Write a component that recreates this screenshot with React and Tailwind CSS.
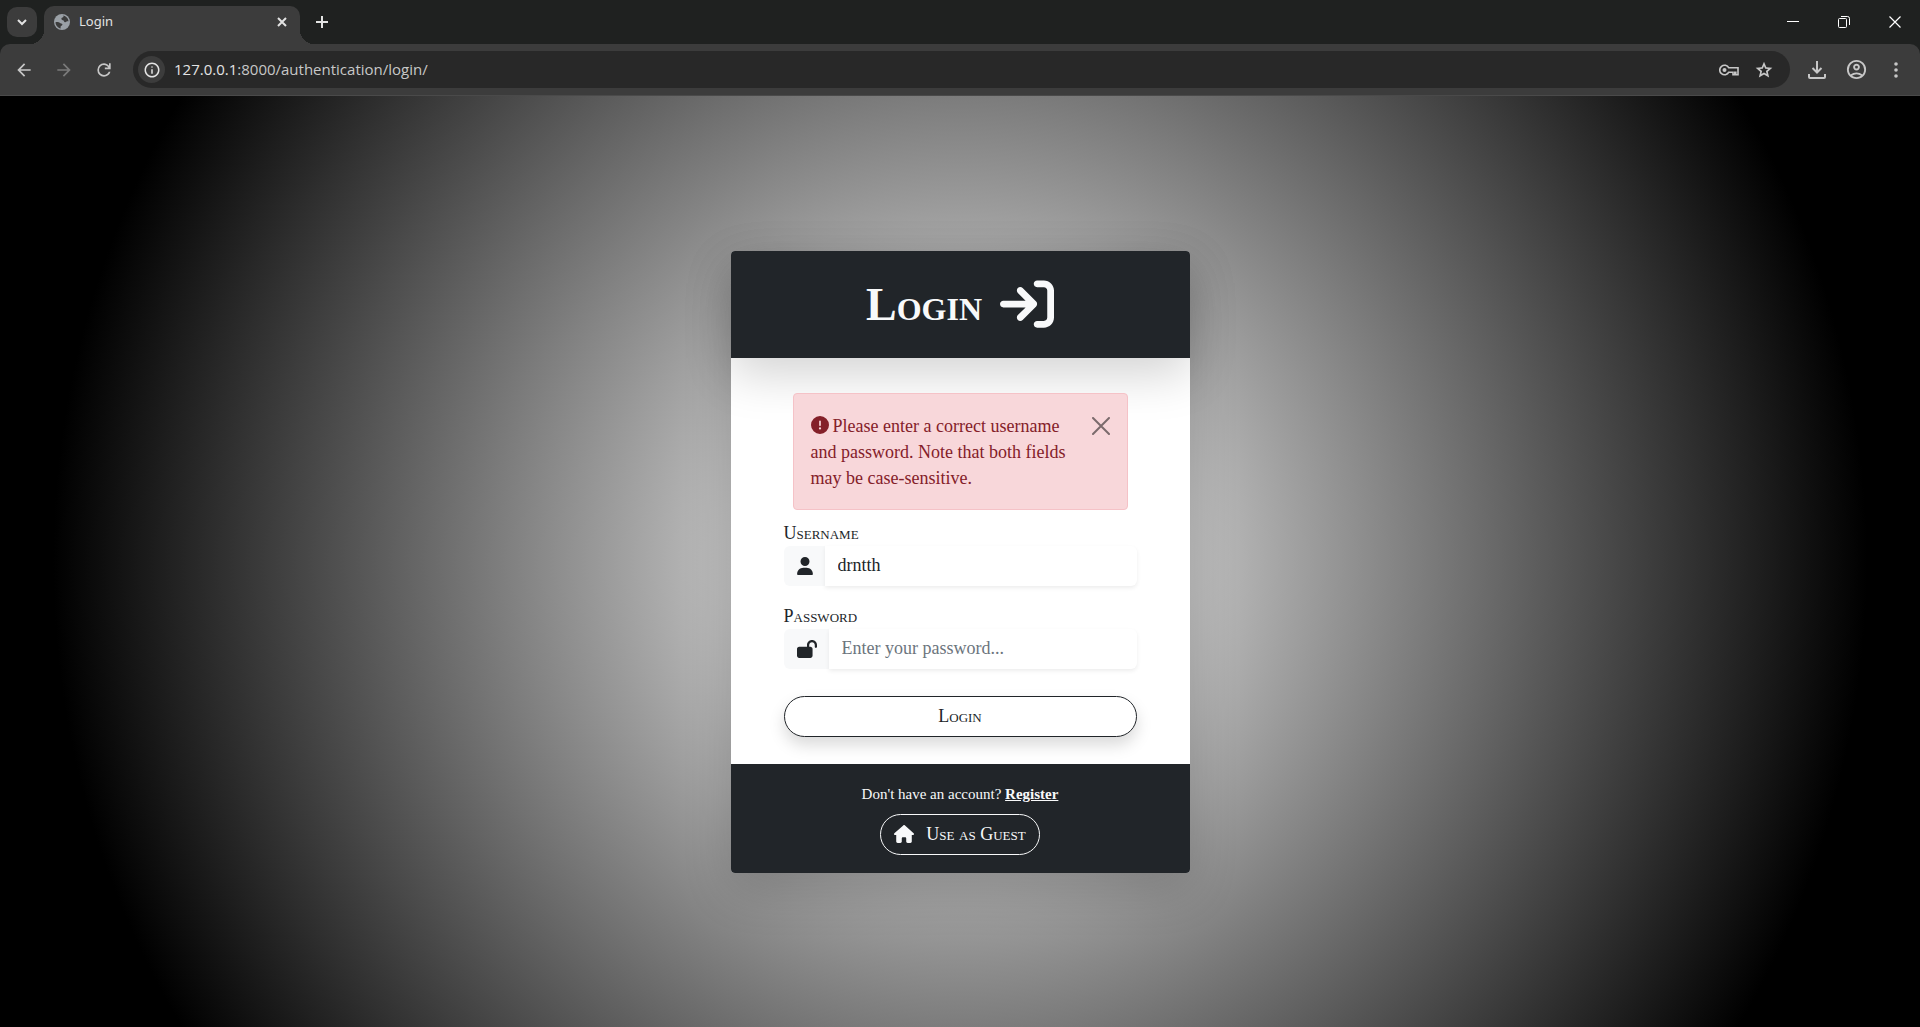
import { useState } from "react";
import {
  FaArrowRightToBracket,
  FaCircleExclamation,
  FaHouse,
  FaLockOpen,
  FaUser,
} from "react-icons/fa6";

function Icon({ d, className }) {
  return (
    <svg viewBox="0 -960 960 960" fill="currentColor" className={className} aria-hidden="true">
      <path d={d} />
    </svg>
  );
}

const ICONS = {
  back: "m313-440 224 224-57 56-320-320 320-320 57 56-224 224h487v80H313Z",
  forward: "M647-440H160v-80h487L423-744l57-56 320 320-320 320-57-56 224-224Z",
  reload:
    "M480-160q-134 0-227-93t-93-227q0-134 93-227t227-93q69 0 132 28.500T720-690v-110h80v280H520v-80h168q-32-56-87.500-88T480-720q-100 0-170 70t-70 170q0 100 70 170t170 70q77 0 139-44t87-116h84q-28 106-114 173t-196 67Z",
  info: "M440-280h80v-240h-80v240Zm40-320q17 0 28.500-11.500T520-640q0-17-11.500-28.500T480-680q-17 0-28.500 11.500T440-640q0 17 11.500 28.500T480-600Zm0 520q-83 0-156-31.500T197-197q-54-54-85.500-127T80-480q0-83 31.500-156T197-763q54-54 127-85.500T480-880q83 0 156 31.500T763-763q54 54 85.500 127T880-480q0 83-31.500 156T763-197q-54 54-127 85.500T480-80Zm0-80q134 0 227-93t93-227q0-134-93-227t-227-93q-134 0-227 93t-93 227q0 134 93 227t227 93Z",
  star: "m354-287 126-76 126 77-33-144 111-96-146-13-58-136-58 135-146 13 111 97-33 143ZM233-120l65-281L80-590l288-25 112-265 112 265 288 25-218 189 65 281-247-149-247 149Z",
  account:
    "M234-276q51-39 114-61.500T480-360q69 0 132 22.500T726-276q35-41 54.500-93T800-480q0-133-93.500-226.500T480-800q-133 0-226.500 93.500T160-480q0 59 19.500 111t54.500 93Zm246-164q-59 0-99.500-40.500T340-580q0-59 40.500-99.500T480-720q59 0 99.500 40.500T620-580q0 59-40.500 99.500T480-440Zm0 360q-83 0-156-31.500T197-197q-54-54-85.500-127T80-480q0-83 31.500-156T197-763q54-54 127-85.500T480-880q83 0 156 31.500T763-763q54 54 85.500 127T880-480q0 83-31.500 156T763-197q-54 54-127 85.500T480-80Zm0-80q53 0 100-15.500t86-44.500q-39-29-86-44.500T480-280q-53 0-100 15.500T294-220q39 29 86 44.500T480-160Zm0-360q26 0 43-17t17-43q0-26-17-43t-43-17q-26 0-43 17t-17 43q0 26 17 43t43 17Z",
};

function TabStrip() {
  return (
    <div className="flex h-11 items-end bg-[#1f2120] text-[#e3e3e3]">
      <button
        aria-label="Search tabs"
        className="mb-[7px] ml-[7px] flex h-[30px] w-[30px] items-center justify-center rounded-[10px] bg-[#3c3c3c]"
      >
        <svg viewBox="0 0 10 10" className="h-[10px] w-[10px]" fill="none" stroke="currentColor" strokeWidth="2">
          <path d="M1 3l4 4 4-4" />
        </svg>
      </button>
      <div className="flex h-[38px] flex-none items-end">
        <span className="-ml-[7px] h-[14px] w-[14px] bg-[radial-gradient(circle_at_0_0,transparent_14px,#3c3c3c_14px)]" />
        <div className="flex h-[38px] w-64 items-center rounded-t-[10px] bg-[#3c3c3c] pr-[10px] pb-[6px] pl-[10px]">
          <svg viewBox="0 0 16 16" className="h-4 w-4" aria-hidden="true">
            <circle cx="8" cy="8" r="8" fill="#9aa0a6" />
            <path
              d="M8.500 1.600C10 2 9.800 3.300 8.600 3.600 7.300 4 7.200 4.800 7.600 5.500c.4.800 2.200.6 2.400 1.700.2 1 1.600 1.200 2.300.6.700-.5 1.500-.6 2.200-.3C14.400 4.500 12 1.800 8.500 1.600ZM1.500 8.200c1.300-.4 3.500-.3 4.200.5.700.8 2.300.5 2.700 1.500.3.900-.7 1.400-1.400 1.800-.6.500-.4 1.500-.3 2.400C3.800 13.800 1.600 11.300 1.500 8.200Z"
              fill="#3c3c3c"
            />
          </svg>
          <span className="ml-[9px] flex-1 text-[13px]">Login</span>
          <button aria-label="Close tab" className="flex h-4 w-4 items-center justify-center">
            <svg viewBox="0 0 10 10" className="h-[10px] w-[10px]" stroke="currentColor" strokeWidth="2">
              <path d="M1 1l8 8M9 1l-8 8" />
            </svg>
          </button>
        </div>
        <span className="h-[14px] w-[14px] bg-[radial-gradient(circle_at_100%_0,transparent_14px,#3c3c3c_14px)]" />
      </div>
      <button aria-label="New tab" className="mb-4 ml-[2px]">
        <svg viewBox="0 0 12 12" className="h-3 w-3" stroke="currentColor" strokeWidth="2">
          <path d="M6 0v12M0 6h12" />
        </svg>
      </button>
      <div className="mr-[19px] mb-4 ml-auto flex items-center gap-[39px]">
        <button aria-label="Minimize">
          <svg viewBox="0 0 12 12" className="h-3 w-3" stroke="#fff">
            <path d="M0 5.500h12" />
          </svg>
        </button>
        <button aria-label="Restore">
          <svg viewBox="0 0 12 12" className="h-3 w-3" fill="none" stroke="#fff">
            <rect x="0.500" y="2.500" width="8" height="9" rx="1" />
            <path d="M3 .5h6.500a2 2 0 0 1 2 2V9" />
          </svg>
        </button>
        <button aria-label="Close window">
          <svg viewBox="0 0 12 12" className="h-3 w-3" stroke="#fff" strokeWidth="1.200">
            <path d="M.5.5l11 11M11.500.5l-11 11" />
          </svg>
        </button>
      </div>
    </div>
  );
}

function Toolbar() {
  return (
    <div className="flex h-[52px] items-center rounded-t-[10px] border-b border-[#4a4a4a] bg-[#3c3c3c] pr-[14px] pl-[14px] text-[#c7c7c7]">
      <button aria-label="Back"><Icon d={ICONS.back} className="h-5 w-5" /></button>
      <button aria-label="Forward" className="ml-5 text-[#7a7a7a]"><Icon d={ICONS.forward} className="h-5 w-5" /></button>
      <button aria-label="Reload" className="ml-5"><Icon d={ICONS.reload} className="h-5 w-5" /></button>
      <div className="ml-[19px] flex h-[37px] flex-1 items-center rounded-full bg-[#282828] pr-[16px] pl-[5px]">
        <button
          aria-label="Site information"
          className="flex h-[27px] w-[27px] items-center justify-center rounded-full bg-[#3c3c3c] text-[#e3e3e3]"
        >
          <Icon d={ICONS.info} className="h-[18px] w-[18px]" />
        </button>
        <div className="ml-[9px] flex-1 font-['Open_Sans',sans-serif] text-[15px] text-[#c7c7c7]">
          <span className="text-[#e3e3e3]">127.0.0.1</span>:8000/authentication/login/
        </div>
        <button aria-label="Passwords">
          <svg viewBox="0 0 20 12" className="h-3 w-5" fill="none" stroke="currentColor" strokeWidth="1.600" aria-hidden="true">
            <path d="M9.800 3.800A4.800 4.800 0 1 0 9.800 8.200H14v2.500h1.800V8.200h1V10.700H19V3.800Z" />
            <circle cx="5.500" cy="6" r="2" fill="currentColor" stroke="none" />
          </svg>
        </button>
        <button aria-label="Bookmark" className="ml-[15px]"><Icon d={ICONS.star} className="h-5 w-5" /></button>
      </div>
      <button aria-label="Downloads" className="ml-[18px]">
        <svg viewBox="0 0 18 18" className="h-[18px] w-[18px]" fill="none" stroke="currentColor" strokeWidth="2" aria-hidden="true">
          <path d="M9 0v11M4.500 7 9 11.500 13.500 7M1 13v3a1 1 0 0 0 1 1h14a1 1 0 0 0 1-1v-3" />
        </svg>
      </button>
      <button aria-label="Profile" className="ml-[19px]"><Icon d={ICONS.account} className="h-[23px] w-[23px]" /></button>
      <button aria-label="Menu" className="ml-[18px]">
        <svg viewBox="0 0 20 20" className="h-5 w-5" fill="currentColor" aria-hidden="true">
          <circle cx="10" cy="4" r="1.800" />
          <circle cx="10" cy="10" r="1.800" />
          <circle cx="10" cy="16" r="1.800" />
        </svg>
      </button>
    </div>
  );
}

function Field({ id, label, icon, ...input }) {
  return (
    <div>
      <label htmlFor={id} className="block leading-[26px] [font-variant-caps:small-caps]">
        {label}
      </label>
      <div className="flex">
        <span className="flex items-center rounded-l-md bg-[#f8f9fa] pr-3 pl-[13px]">{icon}</span>
        <input
          id={id}
          className="h-10 min-w-0 flex-1 rounded-r-md bg-white px-[13px] shadow-[0_2px_4px_rgba(0,0,0,0.075)] outline-none placeholder:text-[#6c757d]"
          {...input}
        />
      </div>
    </div>
  );
}

function LoginCard() {
  const [username, setUsername] = useState("drntth");
  const [alertOpen, setAlertOpen] = useState(true);
  return (
    <main className="w-[459px] rounded-[4px] bg-white text-[18px] text-[#212529] shadow-[0_16px_48px_rgba(0,0,0,0.175)]">
      <header className="flex h-[107px] items-center justify-center gap-[18px] rounded-t-[4px] bg-[#212529] text-[#f8f9fa] shadow-[0_16px_48px_rgba(0,0,0,0.175)]">
        <h1 className="text-[46px] font-bold [font-variant-caps:small-caps]">Login</h1>
        <FaArrowRightToBracket className="h-[54px] w-[54px]" />
      </header>
      <form className="px-[53px] pt-[35px] pb-[27px]" onSubmit={(e) => e.preventDefault()}>
        {alertOpen && (
          <div
            role="alert"
            className="mx-[9px] mb-[10px] flex items-start rounded-[4px] border border-[#f5c2c7] bg-[#f8d7da] px-[17px] pt-[19px] pb-[18px] text-[#842029]"
          >
            <p className="flex-1 leading-[26px]">
              <FaCircleExclamation className="mr-1 inline h-[18px] w-[18px] align-[-2px]" />
              Please enter a correct username and password. Note that both fields may be case-sensitive.
            </p>
            <button type="button" aria-label="Close" className="mt-1 ml-6" onClick={() => setAlertOpen(false)}>
              <svg viewBox="0 0 18 18" className="h-[18px] w-[18px] opacity-50" stroke="#000" strokeWidth="2" strokeLinecap="round">
                <path d="M1 1l16 16M17 1L1 17" />
              </svg>
            </button>
          </div>
        )}
        <div className="flex flex-col gap-[17px]">
          <Field
            id="username"
            label="Username"
            icon={<FaUser className="h-[18px] w-4" />}
            value={username}
            onChange={(e) => setUsername(e.target.value)}
          />
          <Field
            id="password"
            label="Password"
            type="password"
            icon={<FaLockOpen className="h-[18px] w-5" />}
            placeholder="Enter your password..."
          />
        </div>
        <button
          type="submit"
          className="mt-[27px] h-[41px] w-full rounded-full border border-[#212529] bg-white shadow-[0_8px_16px_rgba(0,0,0,0.15)] [font-variant-caps:small-caps]"
        >
          Login
        </button>
      </form>
      <footer className="flex flex-col items-center rounded-b-[4px] bg-[#212529] pt-[19px] pb-[18px] text-[#f8f9fa]">
        <p className="text-[15px] leading-[22px]">
          Don't have an account? <a href="#register" className="font-bold underline">Register</a>
        </p>
        <a
          href="#guest"
          className="mt-[9px] flex h-[41px] items-center gap-3 rounded-full border border-[#f8f9fa] px-[13px] [font-variant-caps:small-caps]"
        >
          <FaHouse className="h-[18px] w-5" />
          Use as Guest
        </a>
      </footer>
    </main>
  );
}

export default function App() {
  return (
    <div className="flex min-h-screen flex-col">
      <div className="bg-[#1f2120] font-['Noto_Sans',sans-serif]">
        <TabStrip />
        <Toolbar />
      </div>
      <div className="flex flex-1 items-center justify-center bg-[radial-gradient(circle,#fff,#000_85%)] font-['Liberation_Serif',serif]">
        <LoginCard />
      </div>
    </div>
  );
}
